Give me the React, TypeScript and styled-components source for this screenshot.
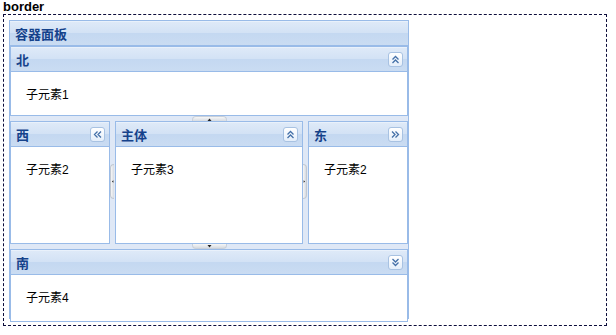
import React from "react";
import styled, { createGlobalStyle } from "styled-components";

const GlobalStyle = createGlobalStyle`
    body {
        margin: 0;
        background: #ffffff;
        font-family: "Liberation Sans", "Noto Sans CJK SC", sans-serif;
    }
`;

type Dir = "up" | "down" | "left" | "right";

const rotation: Record<Dir, number> = { up: 0, right: 90, down: 180, left: 270 };

const DoubleChevron = ({ dir }: { dir: Dir }) => (
    <svg width="9" height="9" viewBox="0 0 9 9" style={{ transform: `rotate(${rotation[dir]}deg)` }}>
        <path d="M1.5 4.5 L4.5 1.5 L7.5 4.5 M1.5 8 L4.5 5 L7.5 8" fill="none" stroke="#4470a8" strokeWidth="1.3" />
    </svg>
);

const Triangle = ({ dir }: { dir: Dir }) => (
    <svg width="5" height="5" viewBox="0 0 5 5" style={{ transform: `rotate(${rotation[dir]}deg)` }}>
        <path d="M0.5 4 L2.5 1.5 L4.5 4 Z" fill="#222" />
    </svg>
);

const Page = styled.div`
    padding: 0 0 0 3px;
`;

const Caption = styled.div`
    font-weight: bold;
    font-size: 13px;
    line-height: 14px;
    color: #000;
`;

const Frame = styled.div`
    box-sizing: border-box;
    width: 604px;
    height: 312px;
    border: 1px dashed #0c0c3a;
    padding: 5px;
`;

const Panel = styled.div`
    box-sizing: border-box;
    width: 400px;
    height: 299px;
    border: 1px solid #99bbe8;
    display: flex;
    flex-direction: column;
`;

const Header = styled.div`
    flex: none;
    height: 24px;
    border-bottom: 1px solid #99bbe8;
    background: linear-gradient(to bottom, #dfeaf8 0%, #d3e2f5 48%, #c4d8f1 52%, #cadcf2 100%);
    box-shadow: inset 0 1px 0 #e9f1fb;
    display: flex;
    align-items: center;
    justify-content: space-between;
    padding: 0 4px 0 5px;
`;

const Title = styled.span`
    font-family: "Liberation Sans", "Noto Sans CJK SC", sans-serif;
    font-weight: bold;
    font-size: 13px;
    color: #15428b;
`;

const Tool = styled.div`
    box-sizing: border-box;
    width: 15px;
    height: 15px;
    border: 1px solid #a8c2e2;
    border-radius: 3px;
    background: linear-gradient(to bottom, #ffffff, #e4eefa);
    display: flex;
    align-items: center;
    justify-content: center;
`;

const LayoutBody = styled.div`
    flex: 1;
    display: flex;
    flex-direction: column;
    background: #dfe8f6;
`;

const Region = styled.div<{ $width?: number; $height?: number }>`
    box-sizing: border-box;
    border: 1px solid #99bbe8;
    background: #fff;
    display: flex;
    flex-direction: column;
    ${(p) => (p.$width ? `width: ${p.$width}px; flex: none;` : "flex: 1;")}
    ${(p) => (p.$height ? `height: ${p.$height}px; flex: none;` : "")}
`;

const Content = styled.div`
    flex: 1;
    padding: 16px 15px;
    font-family: "Liberation Sans", "Noto Sans CJK SC", sans-serif;
    font-size: 12px;
    line-height: 14px;
    color: #000;
`;

const Row = styled.div`
    display: flex;
    height: 123px;
    flex: none;
`;

const HSplit = styled.div`
    flex: none;
    height: 5px;
    position: relative;
`;

const VSplit = styled.div`
    flex: none;
    width: 5px;
    position: relative;
`;

const HHandle = styled.div<{ $bottom?: boolean }>`
    box-sizing: border-box;
    position: absolute;
    left: 182px;
    width: 35px;
    height: 5px;
    top: 0;
    background: linear-gradient(to bottom, #f6f6f6, #d6dbe2);
    border: 1px solid #c9d0da;
    ${(p) => (p.$bottom ? "border-top: none;" : "border-bottom: none;")}
    border-radius: ${(p) => (p.$bottom ? "0 0 4px 4px" : "4px 4px 0 0")};
    display: flex;
    align-items: center;
    justify-content: center;
`;

const VHandle = styled.div<{ $right?: boolean }>`
    box-sizing: border-box;
    position: absolute;
    top: 43px;
    height: 35px;
    width: 4px;
    ${(p) => (p.$right ? "left: 0;" : "right: 1px;")}
    background: linear-gradient(to right, #f6f6f6, #d6dbe2);
    border: 1px solid #c2c9d3;
    ${(p) => (p.$right ? "border-left: none;" : "border-right: none;")}
    border-radius: ${(p) => (p.$right ? "0 4px 4px 0" : "4px 0 0 4px")};
    display: flex;
    align-items: center;
    justify-content: center;
`;

const RegionPanel = ({ title, tool, text, ...rest }: { title: string; tool?: Dir; text: string; $width?: number; $height?: number }) => (
    <Region {...rest}>
        <Header>
            <Title>{title}</Title>
            {tool && (
                <Tool>
                    <DoubleChevron dir={tool} />
                </Tool>
            )}
        </Header>
        <Content>{text}</Content>
    </Region>
);

export default function App() {
    return (
        <Page>
            <GlobalStyle />
            <Caption>border</Caption>
            <Frame>
                <Panel>
                    <Header>
                        <Title>容器面板</Title>
                    </Header>
                    <LayoutBody>
                        <RegionPanel title="北" tool="up" text="子元素1" $height={70} />
                        <HSplit>
                            <HHandle>
                                <Triangle dir="up" />
                            </HHandle>
                        </HSplit>
                        <Row>
                            <RegionPanel title="西" tool="left" text="子元素2" $width={100} />
                            <VSplit>
                                <VHandle>
                                    <Triangle dir="left" />
                                </VHandle>
                            </VSplit>
                            <RegionPanel title="主体" tool="up" text="子元素3" />
                            <VSplit>
                                <VHandle $right>
                                    <Triangle dir="right" />
                                </VHandle>
                            </VSplit>
                            <RegionPanel title="东" tool="right" text="子元素2" $width={100} />
                        </Row>
                        <HSplit>
                            <HHandle $bottom>
                                <Triangle dir="down" />
                            </HHandle>
                        </HSplit>
                        <RegionPanel title="南" tool="down" text="子元素4" />
                    </LayoutBody>
                </Panel>
            </Frame>
        </Page>
    );
}
